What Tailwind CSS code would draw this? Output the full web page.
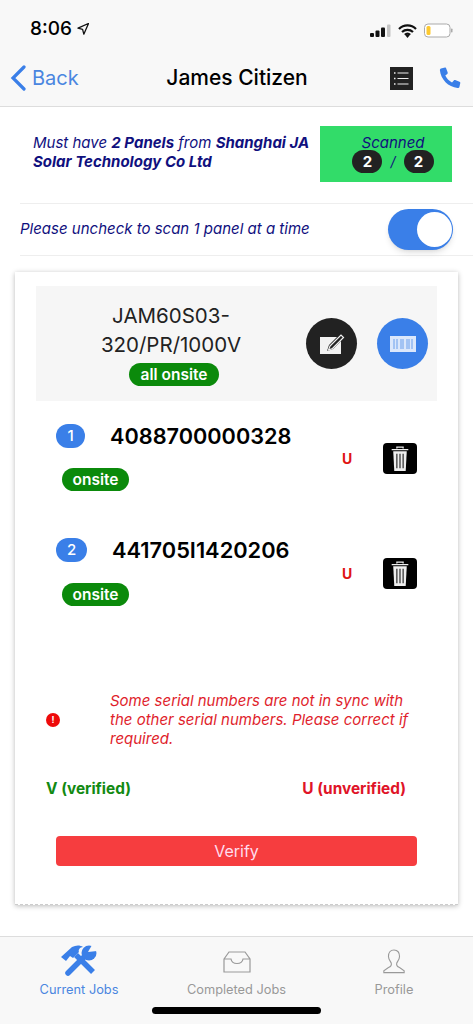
<!DOCTYPE html>
<html lang="en">
<head>
    <meta charset="UTF-8">
    <meta name="viewport" content="width=device-width, initial-scale=1.0">
    <title>James Citizen</title>
    <script src="https://cdn.jsdelivr.net/npm/@tailwindcss/browser@4"></script>
</head>
<body class="bg-white">
<div class="w-[473px] h-[1024px] flex flex-col overflow-hidden relative bg-white font-['Inter','Liberation_Sans',sans-serif]">

    <!-- status bar + nav -->
    <div class="h-[107px] shrink-0 bg-[#f8f8f8] border-b border-[#dddddd] flex flex-col">
        <div class="h-[50px] flex items-end justify-between pl-[30px] pr-[20px] pb-[11px]">
            <div class="flex items-center gap-[5px]">
                <span class="text-[19px] leading-[20px] font-medium text-black">8:06</span>
                <svg width="12" height="12" viewBox="0 0 12 12"><path d="M11.5.5 1 5.2l4.6 1.1 1.2 4.9z" fill="none" stroke="#111" stroke-width="1.3" stroke-linejoin="round"/></svg>
            </div>
            <div class="flex items-center gap-[7px] pb-[1px]">
                <svg width="21" height="13" viewBox="0 0 21 13"><rect x="0" y="9" width="4" height="4" rx="1" fill="#111"/><rect x="5.500" y="6.500" width="4" height="6.500" rx="1" fill="#111"/><rect x="11" y="3.500" width="4" height="9.500" rx="1" fill="#111"/><rect x="17" y="0.500" width="3.500" height="12.500" rx="1" fill="#c4c4c4"/></svg>
                <svg width="19" height="14" viewBox="0 0 19 14"><path d="M1 5a12 12 0 0 1 17 0M4 8a8 8 0 0 1 11 0M6.800 10.800a4 4 0 0 1 5.400 0" fill="none" stroke="#111" stroke-width="2.200"/><path d="M9.500 14 7.500 11.500a3 3 0 0 1 4 0z" fill="#111"/></svg>
                <svg width="29" height="15" viewBox="0 0 29 15"><rect x="0.500" y="1" width="25.500" height="13" rx="3.500" fill="#fff" stroke="#aaaaaa"/><rect x="2.500" y="3" width="4" height="9" rx="1.500" fill="#fdc930"/><rect x="27" y="5.500" width="1.500" height="4" rx="0.700" fill="#aaaaaa"/></svg>
            </div>
        </div>
        <div class="h-[56px] flex items-center relative">
            <div class="flex items-center pl-[10px] gap-[6px] text-[#4a86e0] w-[130px]">
                <svg width="16" height="26" viewBox="0 0 16 26"><path d="M14 2 3 13l11 11" fill="none" stroke="#3a7fe8" stroke-width="3.200" stroke-linecap="round"/></svg>
                <span class="text-[20px] leading-[26px]">Back</span>
            </div>
            <div class="w-[214px] text-center text-[21px] font-medium text-black">James Citizen</div>
            <div class="flex-1 flex items-center gap-[26px] pl-[46px]">
                <svg class="shrink-0" width="23" height="23" viewBox="0 0 23 23"><rect width="23" height="23" fill="#222222"/><path d="M7.500 6h11M7.500 11.500h11M7.500 17h11" stroke="#eeeeee" stroke-width="1.200"/><path d="M4 6h1.500M4 11.500h1.500M4 17h1.500" stroke="#eeeeee" stroke-width="1.500"/></svg>
                <svg class="shrink-0" width="22" height="22" viewBox="0 0 22 22"><path d="M2 1.500 6 0.500c.7 0 1 .4 1.200 1L8.700 5.600c.2.600 0 1-.4 1.400L6.300 8.600c1.300 3 3.600 5.300 6.700 6.800l1.800-2c.4-.4.900-.5 1.400-.3l4.300 1.700c.6.200.9.700.8 1.300l-.9 3.800c-.2.700-1 1.100-1.800 1C9.300 20.300 1.700 12.300.9 3.300.8 2.500 1.300 1.700 2 1.500z" fill="#3a7fe8"/></svg>
            </div>
        </div>
    </div>

    <!-- requirement -->
    <div class="h-[96px] shrink-0 flex items-start pt-[19px]">
        <div class="pl-[33px] w-[320px] pr-[6px] pt-[7px] italic text-[15px] leading-[19px] text-[#10107e]">Must have <b class="font-bold">2 Panels</b> from <b class="font-bold">Shanghai JA Solar Technology Co Ltd</b></div>
        <div class="w-[132px] h-[56px] bg-[#32dc69] flex flex-col items-center pt-[9px] pl-[14px]">
            <div class="italic text-[15px] leading-[15px] text-[#10107e]">Scanned</div>
            <div class="flex items-center gap-[8px] text-[#10107e] italic text-[14px] leading-[23px]">
                <span class="w-[30px] h-[23px] rounded-full bg-[#222222] text-white not-italic font-bold text-[15px] flex items-center justify-center">2</span>
                <span>/</span>
                <span class="w-[30px] h-[23px] rounded-full bg-[#222222] text-white not-italic font-bold text-[15px] flex items-center justify-center">2</span>
            </div>
        </div>
    </div>

    <!-- toggle row -->
    <div class="ml-[20px] h-[53px] shrink-0 border-y border-[#eeeeee] flex items-center justify-between pr-[20px]">
        <span class="italic text-[15px] text-[#10107e]">Please uncheck to scan 1 panel at a time</span>
        <div class="w-[65px] h-[41px] rounded-full bg-[#3a7fe8] relative shadow-md">
            <div class="absolute right-[1px] top-[3px] w-[35px] h-[35px] rounded-full bg-white"></div>
        </div>
    </div>

    <!-- card -->
    <div class="mt-[16px] ml-[15px] w-[443px] h-[633px] shrink-0 bg-white shadow-[0_1px_5px_rgba(0,0,0,0.28)] border-b border-dashed border-[#cccccc] pt-[14px] flex flex-col">
        <div class="mx-[21px] h-[115px] shrink-0 bg-[#f6f6f6] flex items-center">
            <div class="w-[270px] flex flex-col items-center">
                <div class="w-[170px] text-center text-[20.500px] leading-[29px] text-[#222222]">JAM60S03-320/PR/1000V</div>
                <span class="mt-[4px] ml-[6px] h-[23px] px-[12px] rounded-full bg-[#0b8a0b] text-white font-semibold text-[15.500px] leading-[23px]">all onsite</span>
            </div>
            <div class="w-[51px] h-[51px] rounded-full bg-[#222222] flex items-center justify-center">
                <svg width="26" height="26" viewBox="0 0 26 26"><path d="M1 6H18L10 14 8 20l6-2 8-8V23H1z" fill="#f2f2f2"/><path d="M11 15 22 4l2.500 2.500-11 11-4 1.500z" fill="none" stroke="#f2f2f2" stroke-width="1.200"/></svg>
            </div>
            <div class="ml-[20px] w-[51px] h-[51px] rounded-full bg-[#3a7fe8] flex items-center justify-center">
                <svg width="26" height="16" viewBox="0 0 26 16"><rect width="26" height="16" fill="#dbe7fb"/><path d="M4 3v10M7 3v10M11 3v10M13 3v10M17 3v10M19 3v10M22 3v10" stroke="#5f96ea" stroke-width="0.900"/></svg>
            </div>
        </div>

        <!-- serial 1 -->
        <div class="h-[115px] shrink-0 relative pt-[23px]">
            <div class="flex items-center pl-[41px]">
                <span class="w-[29px] h-[24px] rounded-full bg-[#3a7fe8] text-white font-medium text-[15px] flex items-center justify-center">1</span>
                <span class="ml-[25px] text-[21.700px] leading-[24px] font-semibold text-black">4088700000328</span>
            </div>
            <span class="block w-fit mt-[20px] ml-[47px] h-[23px] px-[10.500px] rounded-full bg-[#0b8a0b] text-white font-semibold text-[15.500px] leading-[23px]">onsite</span>
            <span class="absolute left-[327px] top-[47px] text-[14px] font-bold text-[#e01414]">U</span>
            <div class="absolute left-[368px] top-[42px] w-[34px] h-[31px] rounded-[4px] bg-black flex items-center justify-center">
                <svg width="20" height="26" viewBox="0 0 18 25"><path d="M6 2.500V1h6v1.500M1 3.500h16" fill="none" stroke="#eeeeee" stroke-width="1.200"/><path d="M2.500 5h13l-1 19h-11z" fill="#eeeeee"/><path d="M6 7.500v14M9 7.500v14M12 7.500v14" stroke="#222222" stroke-width="1.100"/></svg>
            </div>
        </div>

        <!-- serial 2 -->
        <div class="h-[115px] shrink-0 relative pt-[22px]">
            <div class="flex items-center pl-[41px]">
                <span class="w-[31px] h-[24px] rounded-full bg-[#3a7fe8] text-white font-medium text-[15px] flex items-center justify-center">2</span>
                <span class="ml-[25px] text-[21.800px] leading-[24px] font-semibold text-black">441705I1420206</span>
            </div>
            <span class="block w-fit mt-[21px] ml-[47px] h-[23px] px-[10.500px] rounded-full bg-[#0b8a0b] text-white font-semibold text-[15.500px] leading-[23px]">onsite</span>
            <span class="absolute left-[327px] top-[47px] text-[14px] font-bold text-[#e01414]">U</span>
            <div class="absolute left-[368px] top-[42px] w-[34px] h-[31px] rounded-[4px] bg-black flex items-center justify-center">
                <svg width="20" height="26" viewBox="0 0 18 25"><path d="M6 2.500V1h6v1.500M1 3.500h16" fill="none" stroke="#eeeeee" stroke-width="1.200"/><path d="M2.500 5h13l-1 19h-11z" fill="#eeeeee"/><path d="M6 7.500v14M9 7.500v14M12 7.500v14" stroke="#222222" stroke-width="1.100"/></svg>
            </div>
        </div>

        <!-- warning -->
        <div class="mt-[60px] flex items-center pl-[31px]">
            <span class="w-[14px] h-[14px] rounded-full bg-[#ee0a0a] text-white text-[9px] font-bold leading-[14px] text-center">!</span>
            <p class="ml-[50px] w-[310px] italic text-[15px] leading-[19px] text-[#e01e2c]">Some serial numbers are not in sync with the other serial numbers. Please correct if required.</p>
        </div>

        <div class="mt-[31px] flex justify-between pl-[31px] pr-[52px] text-[15.400px] font-bold leading-[20px]">
            <span class="text-[#128a12]">V (verified)</span>
            <span class="text-[#e01428]">U (unverified)</span>
        </div>

        <button type="button" class="mt-[37px] mx-[41px] h-[30px] rounded-[4px] bg-[#f63d3f] text-[#fde] text-[16px]">Verify</button>
    </div>

    <!-- tab bar -->
    <div class="absolute left-0 right-0 bottom-0 h-[88px] bg-[#f8f8f8] border-t border-[#dddddd] flex">
        <div class="w-[158px] flex flex-col items-center pt-[8px] text-[#4a86e0]">
            <svg width="36" height="32" viewBox="0 0 36 32">
                <path d="M7 28 25 10" stroke="#3a7fe8" stroke-width="5.500" stroke-linecap="round"/>
                <circle cx="28" cy="8" r="7.500" fill="#3a7fe8"/>
                <path d="M27 7 31 0h5v6z" fill="#f8f8f8"/>
                <path d="M32 27 15 10" stroke="#3a7fe8" stroke-width="5.500"/>
                <path d="M0 12 11 2c4-2 8-2 11 0-3 0-5 3-4 5l-6 6-3-2-4 5z" fill="#3a7fe8"/>
            </svg>
            <span class="mt-[4px] text-[12.800px] leading-[18px]">Current Jobs</span>
        </div>
        <div class="w-[157px] flex flex-col items-center pt-[14px] text-[#999999]">
            <svg width="28" height="22" viewBox="0 0 28 22"><path d="M1 8 6 1H22L27 8V21H1ZM1 8H8C9 14 19 14 20 8H27" fill="none" stroke="#999999" stroke-width="1.200"/></svg>
            <span class="mt-[8px] text-[12.800px] leading-[18px]">Completed Jobs</span>
        </div>
        <div class="w-[158px] flex flex-col items-center pt-[12px] text-[#999999]">
            <svg width="24" height="25" viewBox="0 0 26 27"><path d="M13 1c-4 0-6 3-6 7 0 3 2 5 3 7 .5 2 0 4-3 5l-5 3.500v2h22v-2l-5-3.500c-3-1-3.500-3-3-5 1-2 3-4 3-7 0-4-2-7-6-7z" fill="none" stroke="#999999" stroke-width="1.200"/></svg>
            <span class="mt-[7px] text-[12.800px] leading-[18px]">Profile</span>
        </div>
        <div class="absolute left-[152px] bottom-[10px] w-[169px] h-[7px] rounded-full bg-black"></div>
    </div>
</div>
</body>
</html>
